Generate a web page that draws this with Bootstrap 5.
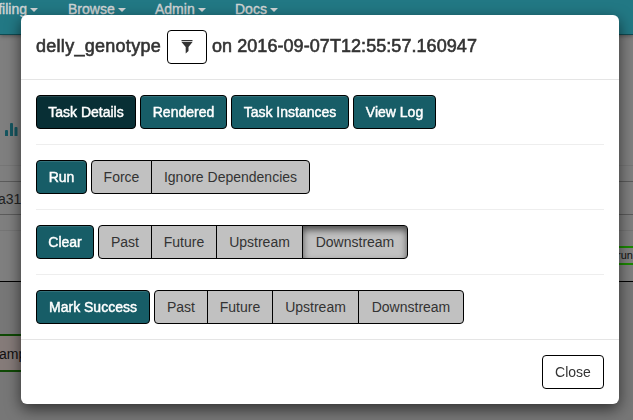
<!DOCTYPE html>
<html lang="en">
<head>
<meta charset="utf-8">
<meta name="viewport" content="width=device-width, initial-scale=1">
<title>Task instance</title>
<link href="https://cdn.jsdelivr.net/npm/bootstrap@5.3.0/dist/css/bootstrap.min.css" rel="stylesheet">
<style>
body{font:14px/20px "Liberation Sans",Arial,sans-serif;color:#333;background:#7f7f7f;height:420px}
.topbar{height:35px;background:#227884;border-bottom:1px solid #0e4b53;padding:0 0 16px;color:#cfd4d5;font-size:14px;line-height:18px;white-space:nowrap;box-shadow:0 1px 4px rgba(0,0,0,.35)}
.topbar .menu{-webkit-text-stroke:.4px}
.topbar .menu::after{content:"";display:inline-block;border:4px solid transparent;border-top-color:currentColor;border-bottom:0;margin-left:3px;vertical-align:2px}
.m1{width:71px;margin-left:-3px;text-align:left}.m1::after{margin-left:2px}.m2{width:87px}.m3{width:80px}
.chart-row{height:131px;padding:88px 0 0 5px;border-bottom:1px solid #767676}
.space-row{height:15px}
.run-row{height:34px;border:solid #5b5b5b;border-width:1px 0;padding:7px 0 0 0;font-size:14px;color:#222}
.run-row span{margin-left:-2px}
.legend-row{height:16px;border-bottom:1px solid #757575}
.graph-gap{height:50px}
.graph{height:139px;border-top:1px solid #000;background:#777}
.node{position:absolute;border:2px solid #0f4a05;color:#111;overflow:hidden;white-space:nowrap}
.node-a{left:-4px;top:334px;width:60px;height:38px;background:#857b79;line-height:37px;font-size:14px;padding-left:1px}
.node-b{left:590px;top:246px;width:60px;height:19px;border-color:#1b8a00;background:#828282;line-height:15px;font-size:11px;padding-left:25px}
.task-modal{width:598px;max-width:none;margin:15px 0 0 21px}
.task-modal .modal-content{height:389px;border:0;border-radius:6px;background:#fff;box-shadow:0 5px 15px rgba(0,0,0,.6);color:#333}
.task-modal .modal-header{height:65px;padding:15px;border-color:#e5e5e5}
.task-modal .modal-title{font-size:18px;line-height:32px;font-weight:500;white-space:nowrap;-webkit-text-stroke:.6px #333}
.task-modal .modal-body{padding:15px;flex:none;height:259px}
.task-modal .modal-footer{height:65px;padding:15px;border-color:#e5e5e5}
.task-modal hr{margin:15px 0;border-color:#eee;opacity:1}
.title-a{width:131px;letter-spacing:.28px}
.title-b{margin-left:5px;letter-spacing:.06px}
.actions{height:34px;gap:4px}
.task-modal .btn{height:34px;padding:0;border:1px solid #000;border-radius:4px;font-size:14px;line-height:20px;white-space:nowrap;color:#333;flex:none}
.task-modal .btn-primary{background:#175d67;color:#fff;-webkit-text-stroke:.45px #fff;box-shadow:inset 0 1px 0 rgba(255,255,255,.12)}
.task-modal .btn-primary.active{background:#082f35}
.task-modal .btn-plain{background:#fff}
.task-modal .btn-toggle{background:#c1c1c1}
.task-modal .btn-toggle:not(:first-child){border-top-left-radius:0;border-bottom-left-radius:0}
.task-modal .btn-toggle:not(:last-child){border-top-right-radius:0;border-bottom-right-radius:0}
.task-modal .btn-toggle.active{box-shadow:inset 0 4px 7px rgba(0,0,0,.6)}
.w40{width:40px}.w51{width:51px}.w54{width:54px}.w58{width:58px}.w61{width:61px}.w62{width:62px}.w66{width:66px}.w83{width:83px}.w87{width:87px}.w100{width:100px}.w106{width:106px}.w114{width:114px}.w118{width:118px}.w159{width:159px}
</style>
<script src="https://cdn.jsdelivr.net/npm/bootstrap@5.3.0/dist/js/bootstrap.bundle.min.js"></script>
</head>
<body class="position-relative overflow-hidden">
<nav class="topbar d-flex">
  <span class="menu m1">&#8202;filing</span><span class="menu m2">Browse</span><span class="menu m3">Admin</span><span class="menu">Docs</span>
</nav>
<main>
  <div class="chart-row"><svg class="d-block" width="13" height="13" viewBox="0 0 13 13" fill="#155660"><path d="M0 8q0-1 1-1h1q1 0 1 1v5H0zM5 1q0-1 1-1h1q1 0 1 1v12H5zM9.500 5q0-1 1-1h1q1 0 1 1v8h-3z"/></svg></div>
  <div class="space-row"></div>
  <div class="run-row"><span>a314</span></div>
  <div class="legend-row"></div>
  <div class="graph-gap"></div>
  <div class="graph"></div>
  <div class="node node-a">amp</div>
  <div class="node node-b">run</div>
</main>
<div class="modal d-block overflow-hidden" tabindex="-1" role="dialog">
  <div class="modal-dialog task-modal">
    <div class="modal-content">
      <div class="modal-header justify-content-start">
        <h4 class="modal-title d-flex m-0"><span class="title-a">delly_genotype</span>
          <button class="btn btn-plain w40 d-flex align-items-center justify-content-center" type="button" aria-label="Filter"><svg width="12" height="14" viewBox="0 0 12 14" fill="#333"><path d="M.5 0h11v1.200H.5zM.5 2h11L7.500 7v4L4.700 13.500V7z"/></svg></button>
          <span class="title-b">on 2016-09-07T12:55:57.160947</span></h4>
      </div>
      <div class="modal-body">
        <div class="actions d-flex"><button class="btn btn-primary active w100">Task Details</button><button class="btn btn-primary w87">Rendered</button><button class="btn btn-primary w118">Task Instances</button><button class="btn btn-primary w83">View Log</button></div>
        <hr>
        <div class="actions d-flex"><button class="btn btn-primary w51">Run</button><div class="btn-group"><button class="btn btn-toggle w61">Force</button><button class="btn btn-toggle w159">Ignore Dependencies</button></div></div>
        <hr>
        <div class="actions d-flex"><button class="btn btn-primary w58">Clear</button><div class="btn-group"><button class="btn btn-toggle w54">Past</button><button class="btn btn-toggle w66">Future</button><button class="btn btn-toggle w87">Upstream</button><button class="btn btn-toggle active w106">Downstream</button></div></div>
        <hr>
        <div class="actions d-flex"><button class="btn btn-primary w114">Mark Success</button><div class="btn-group"><button class="btn btn-toggle w54">Past</button><button class="btn btn-toggle w66">Future</button><button class="btn btn-toggle w87">Upstream</button><button class="btn btn-toggle w106">Downstream</button></div></div>
      </div>
      <div class="modal-footer"><button class="btn btn-plain w62 m-0">Close</button></div>
    </div>
  </div>
</div>
</body>
</html>
